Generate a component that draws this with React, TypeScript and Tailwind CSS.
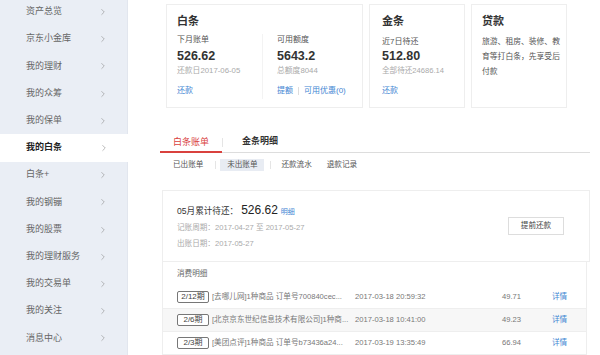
import { ChevronRight } from 'lucide-react';

const menu = [
  '资产总览',
  '京东小金库',
  '我的理财',
  '我的众筹',
  '我的保单',
  '我的白条',
  '白条+',
  '我的钢镚',
  '我的股票',
  '我的理财服务',
  '我的交易单',
  '我的关注',
  '消息中心',
];

const rows = [
  { tag: '2/12期', desc: '[去哪儿网]1种商品 订单号700840cec...', time: '2017-03-18 20:59:32', amount: '49.71' },
  { tag: '2/6期', desc: '[北京京东世纪信息技术有限公司]1种商...', time: '2017-03-18 10:41:00', amount: '49.23' },
  { tag: '2/3期', desc: '[美团点评]1种商品 订单号b73436a24...', time: '2017-03-19 13:35:49', amount: '66.94' },
];

const App = () => {
  return (
    <div
      className="flex w-[600px] h-[355px] overflow-hidden bg-white text-[#333]"
      style={{ fontFamily: '"Liberation Sans", "Noto Sans CJK SC", sans-serif' }}
    >
      {/* Sidebar */}
      <div className="w-[128px] shrink-0 bg-[#eaeef5] border-r border-[#e2e6ee]">
        <div className="-mt-[1.6px]">
          {menu.map((m) => {
            const active = m === '我的白条';
            return (
              <div
                key={m}
                className={`h-[27.2px] flex items-center pl-[26px] pr-[19px] text-[9px] ${
                  active ? 'bg-white font-bold text-[#222] -mr-px' : 'text-[#666]'
                }`}
              >
                <span className="flex-1">{m}</span>
                <ChevronRight className="w-[10px] h-[10px] text-[#888]" strokeWidth={1.4} />
              </div>
            );
          })}
        </div>
      </div>

      {/* Main */}
      <div className="w-[430px] ml-[32px]">
        {/* Top cards */}
        <div className="flex gap-[6px] pl-[6px] pt-[4px]">
          <div className="w-[197px] h-[104px] border border-[#eeeeee] px-[10px] pt-[9px]">
            <div className="text-[11px] font-bold leading-[14px]">白条</div>
            <div className="flex mt-[6px]">
              <div className="w-[86px] border-r border-[#f3f3f3]">
                <div className="text-[8px] text-[#555] leading-[12px]">下月账单</div>
                <div className="text-[12.5px] font-bold leading-[16px] mt-[2px]">526.62</div>
                <div className="text-[7.8px] text-[#aaa] leading-[12px] mt-px">还款日2017-06-05</div>
                <div className="text-[8px] text-[#3f86d3] mt-[8px] leading-[12px] pb-[2px]">还款</div>
              </div>
              <div className="pl-[14px]">
                <div className="text-[8px] text-[#555] leading-[12px]">可用额度</div>
                <div className="text-[12.5px] font-bold leading-[16px] mt-[2px]">5643.2</div>
                <div className="text-[7.8px] text-[#aaa] leading-[12px] mt-px">总额度8044</div>
                <div className="text-[8px] text-[#3f86d3] mt-[8px] leading-[12px] flex items-center whitespace-nowrap">
                  <span>提额</span>
                  <span className="mx-[5px] w-px h-[8px] bg-[#dddddd]" />
                  <span>可用优惠(0)</span>
                </div>
              </div>
            </div>
          </div>

          <div className="w-[96px] h-[104px] border border-[#eeeeee] pl-[12px] pt-[9px]">
            <div className="text-[11px] font-bold leading-[14px]">金条</div>
            <div className="text-[8px] text-[#555] leading-[12px] mt-[8px]">近7日待还</div>
            <div className="text-[12.5px] font-bold leading-[16px]">512.80</div>
            <div className="text-[7.6px] text-[#aaa] leading-[12px] mt-px whitespace-nowrap">全部待还24686.14</div>
            <div className="text-[8px] text-[#3f86d3] mt-[8px] leading-[12px]">还款</div>
          </div>

          <div className="w-[96px] h-[104px] border border-[#eeeeee] pl-[10px] pt-[9px]">
            <div className="text-[11px] font-bold leading-[14px]">贷款</div>
            <div className="w-[80px] text-[7.8px] text-[#555] leading-[15px] mt-[6px]">
              旅游、租房、装修、教育等打白条，先享受后付款
            </div>
          </div>
        </div>

        {/* Tabs */}
        <div className="mt-[24px] h-[21px] flex border-b border-[#dddddd]">
          <div className="w-[62px] flex items-center justify-center text-[9px] text-[#d9413e] border-b-2 border-[#d9413e] -mb-px pt-[2px]">
            白条账单
          </div>
          <div className="w-px h-[9px] bg-[#e5e5e5] self-center" />
          <div className="flex items-center pl-[19px] text-[9px] font-bold text-[#333]">金条明细</div>
        </div>

        {/* Sub tabs */}
        <div className="flex items-center mt-[6px] text-[7.6px] text-[#555] h-[12px]">
          <span className="ml-[13px]">已出账单</span>
          <span className="ml-[12px] w-px h-[8px] bg-[#e5e5e5]" />
          <span className="ml-[4px] w-[44px] h-[12px] leading-[12px] bg-[#e8ecf3] text-center">未出账单</span>
          <span className="ml-[6px] w-px h-[8px] bg-[#e5e5e5]" />
          <span className="ml-[10px]">还款流水</span>
          <span className="ml-[15px]">退款记录</span>
        </div>

        {/* Summary */}
        <div className="mt-[19px] ml-[2px] w-[428px] h-[72px] border border-[#eeeeee] flex items-center pl-[14px] pr-[25px]">
          <div className="flex-1">
            <div className="flex items-baseline leading-[16px]">
              <span className="text-[8.6px] text-[#333]">05月累计待还：</span>
              <span className="text-[12px] text-[#222] ml-[3px]">526.62</span>
              <span className="text-[7px] text-[#3f86d3] ml-[3px]">明细</span>
            </div>
            <div className="text-[7.6px] text-[#aaa] leading-[15px]">记账周期：2017-04-27 至 2017-05-27</div>
            <div className="text-[7.6px] text-[#aaa] leading-[15px] mt-px">出账日期：2017-05-27</div>
          </div>
          <div className="w-[56px] h-[18px] border border-[#dddddd] flex items-center justify-center text-[7.6px] text-[#444]">
            提前还款
          </div>
        </div>

        {/* Detail list */}
        <div className="ml-[2px] w-[425px] border-x border-[#eeeeee]">
          <div className="h-[24px] flex items-center pl-[14px] text-[7.6px] text-[#666]">消费明细</div>
          {rows.map((r, i) => (
            <div
              key={r.tag}
              className={`h-[23px] flex items-center pl-[14px] text-[7.6px] text-[#777] border-b border-[#eeeeee] ${
                i === 1 ? 'bg-[#f7f7f7]' : ''
              }`}
            >
              <span className="w-[32px] h-[12px] border border-[#777] rounded-[2px] flex items-center justify-center text-[8px] text-[#444] shrink-0 bg-white">
                {r.tag}
              </span>
              <span className="ml-[3px] w-[143px] whitespace-nowrap overflow-hidden">{r.desc}</span>
              <span className="w-[147px]">{r.time}</span>
              <span className="w-[50px]">{r.amount}</span>
              <span className="text-[#3f86d3]">详情</span>
            </div>
          ))}
        </div>
      </div>
    </div>
  );
};

export default App;
